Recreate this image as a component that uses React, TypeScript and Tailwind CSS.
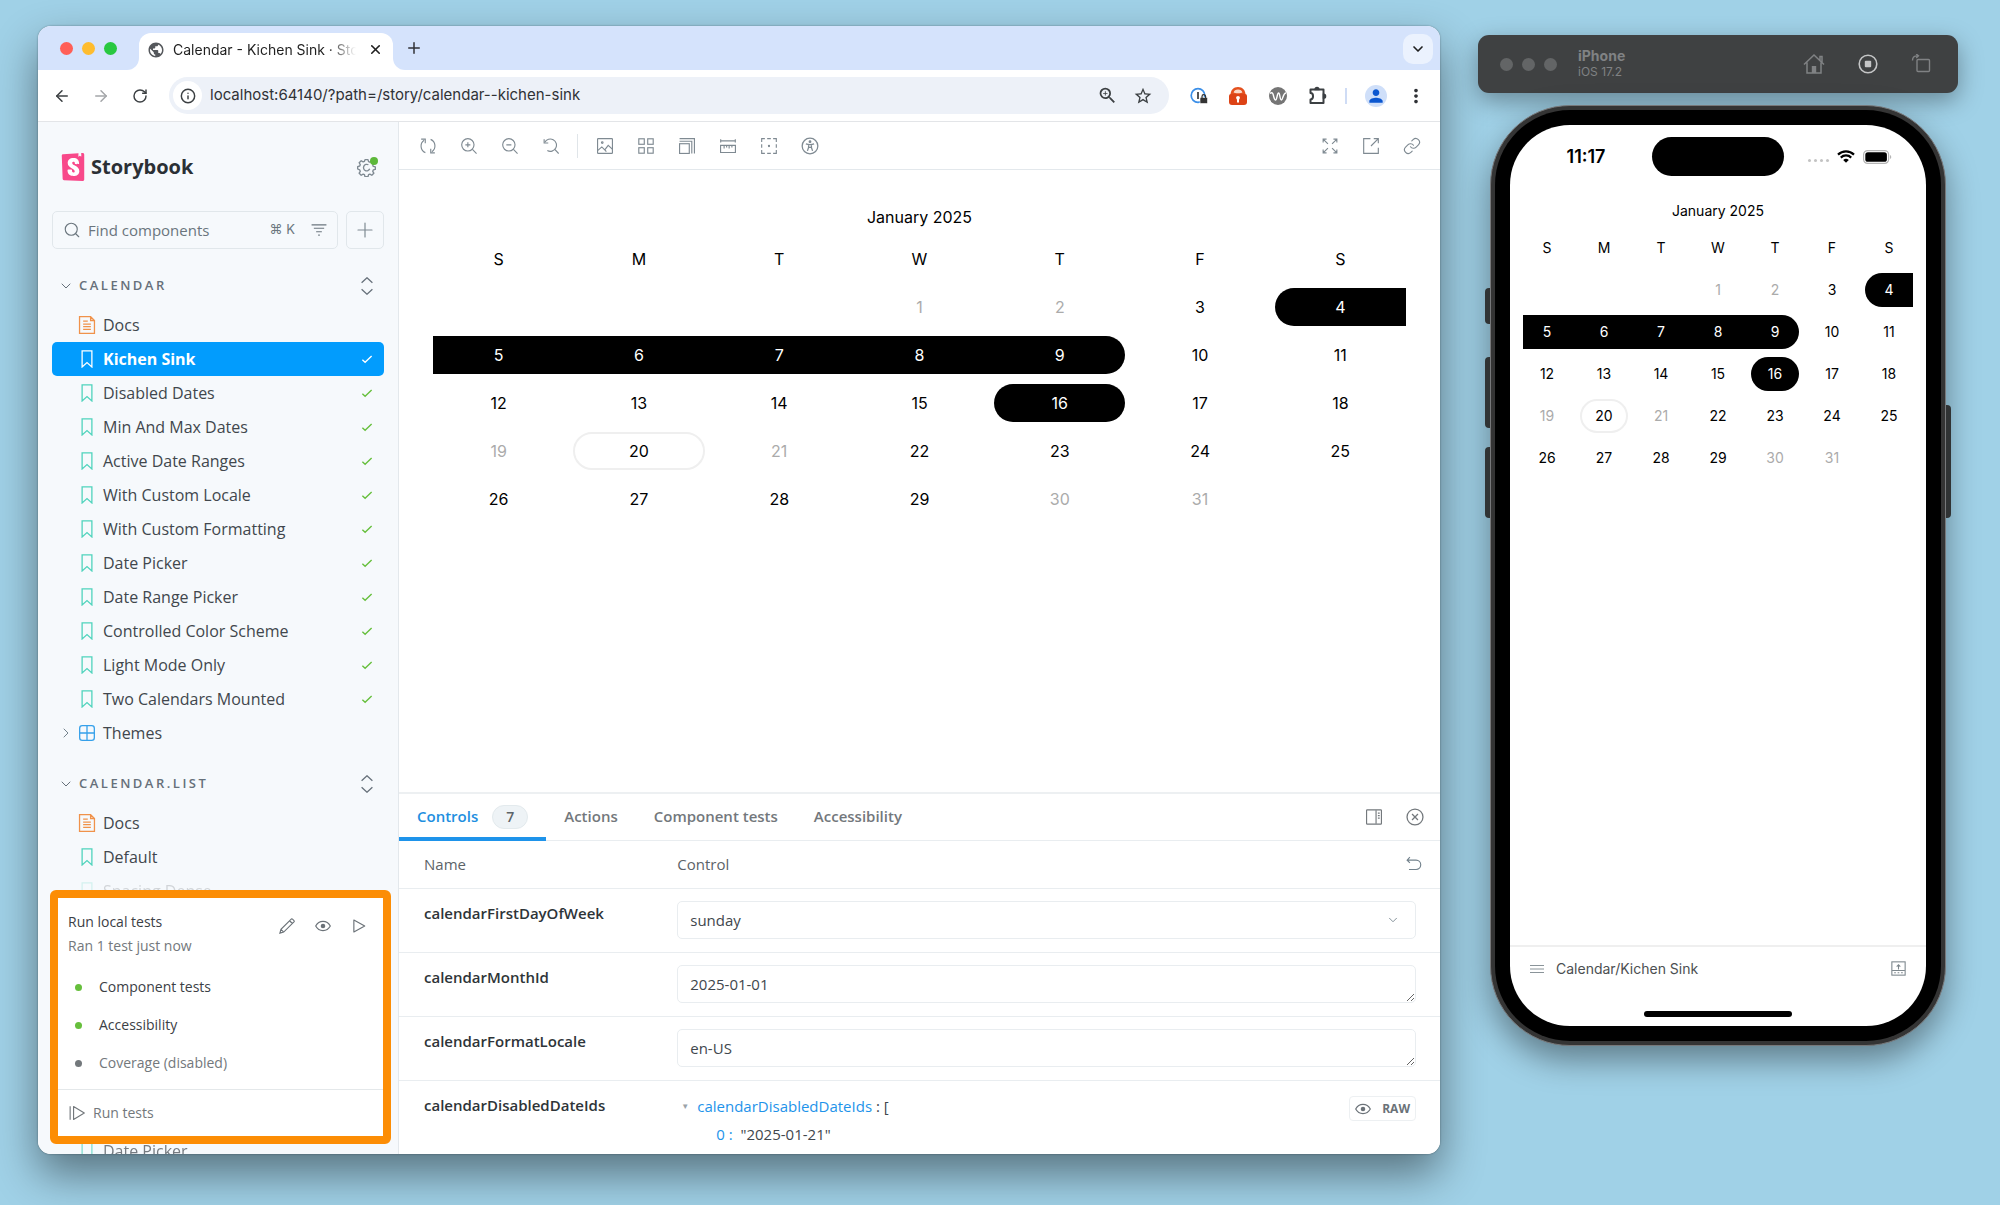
import type { ReactNode } from "react";
import { ArrowLeft, ArrowRight, ChevronDown, ChevronRight, Info, Link, Plus, RotateCw, Search, X } from "lucide-react";
import { MdMoreVert, MdOutlineZoomIn, MdPerson, MdPublic, MdStarBorder } from "react-icons/md";
import { SiStorybook } from "react-icons/si";

function Glyph({ className = "size-4", children }: { className?: string; children: ReactNode }) {
  return (
    <svg viewBox="0 0 14 14" fill="none" stroke="currentColor" strokeWidth="1" className={className} aria-hidden="true">
      {children}
    </svg>
  );
}

const SyncIcon = () => (
  <Glyph>
    <path d="M4.7 12.8A6.2 6.2 0 0 1 3.6 2M9.3 1.2A6.2 6.2 0 0 1 10.4 12" />
    <path d="M1 1h3.6v3.6M13 13H9.4V9.4" />
  </Glyph>
);
const ZoomInIcon = () => (
  <Glyph>
    <circle cx="6" cy="6" r="5.4" />
    <path d="M10 10l3.6 3.6M6 3.8v4.4M3.8 6h4.4" />
  </Glyph>
);
const ZoomOutIcon = () => (
  <Glyph>
    <circle cx="6" cy="6" r="5.4" />
    <path d="M10 10l3.6 3.6M3.8 6h4.4" />
  </Glyph>
);
const ZoomResetIcon = () => (
  <Glyph>
    <path d="M1.6 3.8A5.4 5.4 0 1 1 3.8 11" />
    <path d="M1 1v3.4h3.6M10.3 10l3.4 3.6" />
  </Glyph>
);
const PhotoIcon = () => (
  <Glyph>
    <rect x="0.5" y="0.5" width="13" height="13" rx="0.6" />
    <circle cx="4.6" cy="4" r="0.7" />
    <path d="M.8 10.8l3.4-3 2.6 2.6 3-4 3.6 3.4M6.8 10.4l1.4 1.6" />
  </Glyph>
);
const GridIcon = () => (
  <Glyph>
    <rect x="0.7" y="0.7" width="4.8" height="4.8" />
    <rect x="8.5" y="0.7" width="4.8" height="4.8" />
    <rect x="0.7" y="8.5" width="4.8" height="4.8" />
    <rect x="8.5" y="8.5" width="4.8" height="4.8" />
  </Glyph>
);
const ViewportIcon = () => (
  <Glyph>
    <rect x="0.5" y="5" width="8.5" height="8.5" />
    <path d="M.5 2.8h10.7v10.7M.5.6h13v13" />
  </Glyph>
);
const MeasureIcon = () => (
  <Glyph>
    <path d="M.6 1v3M13.4 1v3M.6 2.5h12.8M.5 6.5h13v6.2H.5zM3.6 6.5v2.6M5.8 6.5v1.8M8 6.5v2.6M10.4 6.5v1.8" />
  </Glyph>
);
const OutlineIcon = () => (
  <Glyph>
    <path d="M.6 3.4V.6h2.8M10.6.6h2.8v2.8M13.4 10.6v2.8h-2.8M3.4 13.4H.6v-2.8M5.4.6h3.2M5.4 13.4h3.2M.6 5.4v3.2M13.4 5.4v3.2" />
    <circle cx="7" cy="7" r="0.5" fill="currentColor" />
  </Glyph>
);
const PersonIcon = () => (
  <Glyph className="size-[18px]">
    <circle cx="7" cy="7" r="6.1" />
    <circle cx="7" cy="3.6" r="0.6" fill="currentColor" />
    <path d="M3.8 5.4c2 .7 4.4.7 6.4 0M5.9 5.9v2.2L5 10.8M8.1 5.9v2.2l.9 2.7M5.9 8h2.2" />
  </Glyph>
);
const ExpandIcon = () => (
  <Glyph>
    <path d="M1 4V1h3M1.2 1.2l4 4M10 1h3v3M12.8 1.2l-4 4M13 10v3h-3M12.8 12.8l-4-4M4 13H1v-3M1.2 12.8l4-4" />
  </Glyph>
);
const ShareIcon = () => (
  <Glyph>
    <path d="M6.5.6H.6v12.8h12.8V8.6M9.4.6h4v4M13.2.8L7 7" />
  </Glyph>
);
const SidePanelIcon = () => (
  <Glyph>
    <rect x="0.5" y="0.8" width="13" height="12.4" rx="0.6" />
    <path d="M8.8 1v12M10.4 3.6h1.6M10.4 5.8h1.6M10.4 8h1.6" />
  </Glyph>
);
const CloseCircleIcon = () => (
  <Glyph className="size-[18px]">
    <circle cx="7" cy="7" r="6.2" />
    <path d="M4.7 4.7l4.6 4.6M9.3 4.7L4.7 9.3" />
  </Glyph>
);
const UndoIcon = () => (
  <Glyph>
    <path d="M3.4 1L1 3.6 3.4 6M1.2 3.6h7.6a4 4 0 0 1 0 8.2H2.6" />
  </Glyph>
);
const EyeIcon = () => (
  <Glyph>
    <path d="M.6 7C2 4.4 4.3 3 7 3s5 1.4 6.4 4C12 9.6 9.7 11 7 11S2 9.6.6 7z" />
    <circle cx="7" cy="7" r="2" fill="currentColor" stroke="none" />
  </Glyph>
);
const PencilIcon = () => (
  <Glyph>
    <path d="M.8 13.2l.9-3.3L10.9.8c.5-.4 2.9 1.8 2.4 2.4L4.1 12.3zM9.3 2.4l2.4 2.4M1.7 9.9l2.4 2.4" />
  </Glyph>
);
const PlayIcon = () => (
  <Glyph>
    <path d="M2.5 1.8v10.4l9.500-5.200z" strokeLinejoin="round" />
  </Glyph>
);
const PlayAllIcon = () => (
  <Glyph>
    <path d="M1 1v12M4 1.400v11.200L13.400 7z" strokeLinejoin="round" />
  </Glyph>
);
const FilterIcon = () => (
  <Glyph>
    <path d="M.5 2.5h13M2.5 5.5h9M4.5 8.5h5M6.3 11.5h1.4" />
  </Glyph>
);
const ExpandAltIcon = () => (
  <Glyph className="size-[18px]">
    <path d="M2.8 4.4L7 .6l4.2 3.8M2.8 9.6L7 13.4l4.2-3.8" />
  </Glyph>
);
const CheckIcon = () => (
  <Glyph className="size-3">
    <path d="M1.6 7.8l3.2 3L12.4 3.6" strokeWidth="1.6" />
  </Glyph>
);
const BookmarkIcon = () => (
  <Glyph className="size-[18px]">
    <path d="M3.2.6h7.6v12.6L7 9.8l-3.8 3.4z" />
  </Glyph>
);
const DocIcon = () => (
  <Glyph className="size-[18px]">
    <path d="M1.2.5h8.6l3 3v10H1.2zM9.8.5v3h3M4 4h3.6M4 6.3h6M4 8.3h6M4 10.4h6" />
  </Glyph>
);
const ComponentIcon = () => (
  <Glyph className="size-[18px]">
    <rect x="1.3" y="1.3" width="11.4" height="11.4" rx="2" />
    <path d="M7 1.400v11.200M1.400 7h11.200" />
  </Glyph>
);
const CogIcon = () => (
  <Glyph className="size-[19px]">
    <path d="M5.900 1.200h2.200l.4 1.500 1 .4 1.400-.8 1.500 1.500-.8 1.400.4 1 1.500.4v1.800l-1.500.4-.4 1 .8 1.400-1.500 1.500-1.400-.8-1 .4-.4 1.500H5.900l-.4-1.500-1-.4-1.400.8-1.500-1.500.8-1.400-.4-1L.5 8.100V6.300L2 5.900l.4-1-.8-1.400L3.100 2l1.400.8 1-.4z" strokeLinejoin="round" />
    <path d="M8.4 5A2.4 2.4 0 1 0 9.4 8" />
  </Glyph>
);

type Day = { n: number; kind?: "muted" | "start" | "mid" | "end" | "single" | "today"; bridge?: boolean };

const days: Day[] = Array.from({ length: 31 }, (_, i) => {
  const n = i + 1;
  if ([1, 2, 19, 21, 30, 31].includes(n)) return { n, kind: "muted" };
  if (n === 4) return { n, kind: "start" };
  if (n >= 5 && n <= 8) return { n, kind: "mid", bridge: true };
  if (n === 9) return { n, kind: "end" };
  if (n === 16) return { n, kind: "single" };
  if (n === 20) return { n, kind: "today" };
  return { n };
});

const dayStyle = {
  plain: "text-black",
  muted: "text-[#ababab]",
  start: "rounded-l-full bg-black text-white",
  mid: "bg-black text-white",
  end: "rounded-r-full bg-black text-white",
  single: "rounded-full bg-black text-white",
  today: "rounded-full border-2 border-[#efefef] text-black",
};

function Calendar({ compact = false }: { compact?: boolean }) {
  const size = compact ? "h-[34px] text-sm" : "h-[38px] text-base";
  return (
    <section aria-label="January 2025" className="font-['Inter',sans-serif] text-black">
      <h2 className={compact ? "text-center text-sm leading-6" : "text-center text-base leading-[26px]"}>January 2025</h2>
      <div className={compact ? "mt-2 grid grid-cols-7 gap-x-[9px] gap-y-2" : "mt-[10px] grid grid-cols-7 gap-x-[9px] gap-y-[10px]"}>
        {["S", "M", "T", "W", "T", "F", "S"].map((d, i) => (
          <div key={i} className={`flex items-center justify-center ${size}`}>{d}</div>
        ))}
        <div className="col-span-3" />
        {days.map((d) => (
          <button key={d.n} type="button" className={`relative flex items-center justify-center ${size} ${dayStyle[d.kind ?? "plain"]}`}>
            {d.n}
            {d.bridge && <span className="absolute inset-y-0 left-full w-[10px] bg-black" />}
          </button>
        ))}
      </div>
    </section>
  );
}

function BrowserChrome() {
  return (
    <header className="font-['Inter',sans-serif] text-[#3c4043]">
      <div className="flex h-11 items-end bg-[#d5e3fc] pr-[7px] pl-[22px]">
        <div className="flex h-11 items-center gap-[9px]">
          <span className="size-[13px] rounded-full bg-[#ff5f57]" />
          <span className="size-[13px] rounded-full bg-[#febc2e]" />
          <span className="size-[13px] rounded-full bg-[#28c840]" />
        </div>
        <div className="relative ml-[22px] flex h-[37px] w-[254px] items-center rounded-t-xl bg-white pr-[10px] pb-1 pl-2">
          <span className="absolute bottom-0 -left-3 size-3 bg-white"><span className="block size-3 rounded-br-xl bg-[#d5e3fc]" /></span>
          <span className="absolute -right-3 bottom-0 size-3 bg-white"><span className="block size-3 rounded-bl-xl bg-[#d5e3fc]" /></span>
          <MdPublic className="size-[18px] shrink-0 text-[#55585c]" />
          <span className="ml-2 flex-1 overflow-hidden bg-linear-to-r from-[#1f1f1f] from-85% to-transparent bg-clip-text text-sm whitespace-nowrap text-transparent">
            Calendar - Kichen Sink · Storybook
          </span>
          <button type="button" aria-label="Close tab" className="ml-3 text-[#1f1f1f]"><X className="size-[15px]" strokeWidth={2.5} /></button>
        </div>
        <button type="button" aria-label="New tab" className="mb-[13px] ml-3 text-[#303236]"><Plus className="size-[18px]" /></button>
        <button type="button" aria-label="Search tabs" className="mb-[6px] ml-auto flex size-[30px] items-center justify-center rounded-[10px] bg-[#ebf2fe] text-[#1f1f1f]">
          <ChevronDown className="size-4" strokeWidth={2.5} />
        </button>
      </div>
      <div className="flex h-[52px] items-center border-b border-[#e3e5e8] bg-white pr-[13px] pl-[15px]">
        <button type="button" aria-label="Back"><ArrowLeft className="size-[18px]" /></button>
        <button type="button" aria-label="Forward" className="ml-[21px] text-[#a4a6a9]"><ArrowRight className="size-[18px]" /></button>
        <button type="button" aria-label="Reload" className="ml-[22px]"><RotateCw className="size-4" strokeWidth={2.2} /></button>
        <div className="ml-[21px] flex h-[37px] flex-1 items-center rounded-full bg-[#edf1f8] pr-4 pl-1">
          <span className="flex size-[29px] items-center justify-center rounded-full bg-white"><Info className="size-4" strokeWidth={2.2} /></span>
          <input aria-label="Address" defaultValue="localhost:64140/?path=/story/calendar--kichen-sink" className="ml-2 min-w-0 flex-1 bg-transparent text-[15px] text-[#303236] outline-none" />
          <MdOutlineZoomIn className="size-[21px]" />
          <MdStarBorder className="ml-[15px] size-5" />
        </div>
        <div className="ml-5 flex items-center">
          <svg viewBox="0 0 20 20" className="size-5" aria-hidden="true">
            <circle cx="9" cy="9.5" r="6.8" fill="#fff" stroke="#3b8fe8" strokeWidth="1.7" />
            <path d="M9 6v7" stroke="#555" strokeWidth="2" />
            <rect x="11" y="11.5" width="7.5" height="6" rx="1" fill="#333" stroke="#fff" strokeWidth="0.6" />
            <path d="M13 12v-1.500a1.800 1.800 0 0 1 3.600 0V12" fill="none" stroke="#333" strokeWidth="1.2" />
          </svg>
          <svg viewBox="0 0 20 20" className="ml-[19px] size-5" aria-hidden="true">
            <path d="M2.500 9C2.500 4 5.500 1 10 1s7.500 3 7.500 8z" fill="#e4511f" />
            <path d="M5.600 6.600C6 4.300 7.600 3.400 10 3.400s4 .9 4.400 3.200c-1 1-7.800 1-8.800 0z" fill="#fbd9c8" />
            <path d="M1 10a2 2 0 0 1 2-2h14a2 2 0 0 1 2 2v6a3 3 0 0 1-3 3H4a3 3 0 0 1-3-3z" fill="#dd4316" />
            <circle cx="10" cy="11.8" r="1.9" fill="#fff" />
            <path d="M9 12h2v4.500H9z" fill="#fff" />
          </svg>
          <svg viewBox="0 0 20 20" className="ml-5 size-5" aria-hidden="true">
            <circle cx="10" cy="10" r="9" fill="#757575" />
            <path d="M2 7.500c2-1.500 2.800-.5 3.300 1.500.7 3 1.300 5 2.300 5 1.400 0 1.500-7 3-7s1.200 7 2.700 7c1.700 0 1.600-7 4.700-7" fill="none" stroke="#fff" strokeWidth="1.4" />
          </svg>
          <svg viewBox="0 0 20 20" className="ml-5 size-5" fill="none" stroke="currentColor" strokeWidth="2" aria-hidden="true">
            <path d="M2.500 3.500h13v13.500h-13v-3.600c3.400 0 3.400-6.300 0-6.300z" strokeLinejoin="round" />
            <path d="M7.400 3.300a1.600 1.600 0 0 1 3.200 0zM15.700 8.600a1.600 1.600 0 0 1 0 3.200z" fill="currentColor" />
          </svg>
          <span className="ml-[17px] h-4 w-[2px] bg-[#cfdcf5]" />
          <button type="button" aria-label="Profile" className="ml-[18px] flex size-[22px] items-center justify-center rounded-full bg-[#cfdff9] text-[#0b57d0]"><MdPerson className="size-5" /></button>
          <button type="button" aria-label="Menu" className="ml-[18px] text-[#303236]"><MdMoreVert className="size-[22px]" /></button>
        </div>
      </div>
    </header>
  );
}

function Group({ title, children }: { title: string; children: ReactNode }) {
  return (
    <section>
      <div className="mb-2 flex h-7 items-center pr-2 pl-[6px] text-[#66707a]">
        <button type="button" className="flex flex-1 items-center gap-[5px] text-left text-[13px] font-semibold tracking-[2.5px] uppercase">
          <ChevronDown className="size-4" strokeWidth={1.5} />
          {title}
        </button>
        <button type="button" aria-label={`Expand all in ${title}`}><ExpandAltIcon /></button>
      </div>
      <ul>{children}</ul>
    </section>
  );
}

function Item({ label, kind = "story", selected = false, passed = false, expandable = false, fade = "" }: {
  label: string; kind?: "story" | "docs" | "component"; selected?: boolean; passed?: boolean; expandable?: boolean; fade?: string;
}) {
  const iconColor = selected ? "text-white" : kind === "docs" ? "text-[#f0924a]" : kind === "component" ? "text-[#35a0ea]" : "text-[#4fd3bc]";
  return (
    <li className={fade}>
      <a href="#" className={`flex h-[34px] items-center rounded-[5px] pr-[7px] pl-[6px] text-base ${selected ? "bg-[#029cfd] font-bold text-white" : "text-[#41474d]"}`}>
        <span className="flex w-5 shrink-0">{expandable && <ChevronRight className="size-4 text-[#73828c]" strokeWidth={1.5} />}</span>
        <span className={`mr-[7px] ${iconColor}`}>
          {kind === "docs" ? <DocIcon /> : kind === "component" ? <ComponentIcon /> : <BookmarkIcon />}
        </span>
        <span className="flex-1">{label}</span>
        {passed && <span className={selected ? "mr-1 text-white" : "mr-1 text-[#66bf3c]"}><CheckIcon /></span>}
      </a>
    </li>
  );
}

const stories = ["Disabled Dates", "Min And Max Dates", "Active Date Ranges", "With Custom Locale", "With Custom Formatting", "Date Picker", "Date Range Picker", "Controlled Color Scheme", "Light Mode Only", "Two Calendars Mounted"];

function TestPanel() {
  return (
    <section aria-label="Local tests" className="absolute right-[7px] bottom-[10px] left-3 rounded-md border-8 border-[#fc8d05] bg-white pt-3 text-sm text-[#3b4045]">
      <div className="flex justify-between pr-4 pl-[10px]">
        <div className="leading-6">
          <p className="font-medium">Run local tests</p>
          <p className="text-[#73787c]">Ran 1 test just now</p>
        </div>
        <div className="flex h-8 items-center gap-5 text-[#6b7278]">
          <button type="button" aria-label="Edit"><PencilIcon /></button>
          <button type="button" aria-label="Watch"><EyeIcon /></button>
          <button type="button" aria-label="Run"><PlayIcon /></button>
        </div>
      </div>
      <ul className="mt-[10px] mb-[7px]">
        {[
          ["Component tests", "bg-[#66bf3c]", ""],
          ["Accessibility", "bg-[#66bf3c]", ""],
          ["Coverage (disabled)", "bg-[#73787c]", "text-[#73787c]"],
        ].map(([label, dot, tone]) => (
          <li key={label} className={`flex h-[38px] items-center gap-[17px] pl-[17px] ${tone}`}>
            <span className={`size-[7px] rounded-full ${dot}`} />
            {label}
          </li>
        ))}
      </ul>
      <button type="button" className="flex h-[47px] w-full items-center gap-2 border-t border-[#e4e8ea] pl-[11px] font-medium text-[#73787c]">
        <PlayAllIcon />
        Run tests
      </button>
    </section>
  );
}

function Sidebar() {
  return (
    <aside className="relative w-[361px] shrink-0 overflow-hidden border-r border-[#e3e8ec] bg-[#f6f9fc] px-[14px] pt-[31px]">
      <div className="flex h-7 items-center pr-2 pl-[9px]">
        <span className="relative flex"><span className="absolute inset-x-1 inset-y-1 bg-white" /><SiStorybook className="relative -mx-[2px] size-7 text-[#f8498a]" /></span>
        <span className="ml-[6px] text-xl font-bold text-[#2b3035]">Storybook</span>
        <button type="button" aria-label="Settings" className="relative ml-auto text-[#7f8a92]">
          <CogIcon />
          <span className="absolute -top-px -right-[2px] size-2 rounded-full bg-[#5db83a]" />
        </button>
      </div>
      <div className="mt-[30px] flex gap-2">
        <label className="flex h-[38px] min-w-0 flex-1 items-center rounded-[5px] border border-[#e1e7eb] px-[10px] text-[#6b767e]">
          <Search className="size-[18px] shrink-0" strokeWidth={1.5} />
          <input aria-label="Find components" placeholder="Find components" className="ml-[7px] min-w-0 flex-1 bg-transparent text-[15px] outline-none placeholder:text-[#6a757d]" />
          <kbd className="mr-4 font-['Inter',sans-serif] text-[13px]">⌘ K</kbd>
          <FilterIcon />
        </label>
        <button type="button" aria-label="Create story" className="flex size-[38px] items-center justify-center rounded-[5px] border border-[#e1e7eb] text-[#7f8a92]"><Plus className="size-6" strokeWidth={1.2} /></button>
      </div>
      <nav className="mt-[23px] flex flex-col gap-5">
        <Group title="Calendar">
          <Item label="Docs" kind="docs" />
          <Item label="Kichen Sink" selected passed />
          {stories.map((s) => <Item key={s} label={s} passed />)}
          <Item label="Themes" kind="component" expandable />
        </Group>
        <Group title="Calendar.List">
          <Item label="Docs" kind="docs" />
          <Item label="Default" />
          <Item label="Spacing Dense" fade="opacity-20" />
          <Item label="Date Picker" fade="mt-[226px] opacity-70" />
        </Group>
      </nav>
      <TestPanel />
    </aside>
  );
}

function ToolButton({ label, children }: { label: string; children: ReactNode }) {
  return <button type="button" aria-label={label} className="flex w-[41px] justify-center">{children}</button>;
}

function Preview() {
  return (
    <section className="flex flex-1 flex-col bg-white">
      <div className="flex h-12 items-center border-b border-[#e3e8ec] pr-2 pl-2 text-[#7f8a92]">
        <ToolButton label="Remount"><SyncIcon /></ToolButton>
        <ToolButton label="Zoom in"><ZoomInIcon /></ToolButton>
        <ToolButton label="Zoom out"><ZoomOutIcon /></ToolButton>
        <ToolButton label="Reset zoom"><ZoomResetIcon /></ToolButton>
        <span className="mx-[6px] h-6 w-px bg-[#e0e5e9]" />
        <ToolButton label="Background"><PhotoIcon /></ToolButton>
        <ToolButton label="Grid"><GridIcon /></ToolButton>
        <ToolButton label="Viewport"><ViewportIcon /></ToolButton>
        <ToolButton label="Measure"><MeasureIcon /></ToolButton>
        <ToolButton label="Outline"><OutlineIcon /></ToolButton>
        <ToolButton label="Vision"><PersonIcon /></ToolButton>
        <span className="flex-1" />
        <ToolButton label="Full screen"><ExpandIcon /></ToolButton>
        <ToolButton label="Open in new tab"><ShareIcon /></ToolButton>
        <ToolButton label="Copy link"><Link className="size-[18px]" strokeWidth={1.5} /></ToolButton>
      </div>
      <div className="px-[34px] pt-[34px]"><Calendar /></div>
    </section>
  );
}

const nameCell = "pt-[13px] pl-[25px] text-left align-top text-[15px] leading-[22px] font-semibold text-[#2e3438]";
const controlCell = "pt-3 pr-6 pb-[13px] pl-[18px]";
const field = "block h-[38px] w-full rounded-[5px] border border-[#e9edf0] bg-white px-3 text-[15px] text-[#41474d] outline-none";

function ControlsPanel() {
  return (
    <section className="overflow-hidden border-t-2 border-[#edf0f2] bg-white pb-[6px]">
      <div className="flex h-[47px] items-center border-b border-[#e9edf0] pr-[5px] text-[15px] font-semibold text-[#73787c]">
        <div role="tablist" className="flex h-full gap-9">
          <button role="tab" aria-selected="true" type="button" className="relative flex items-center gap-[14px] px-[18px] text-[#1e8fe0]">
            Controls
            <span className="flex h-6 w-9 items-center justify-center rounded-full border border-[#e3eaed] bg-[#eef3f6] text-sm text-[#5c6368]">7</span>
            <span className="absolute inset-x-0 -bottom-px h-1 bg-[#1e93ea]" />
          </button>
          <button role="tab" aria-selected="false" type="button" className="-ml-[18px]">Actions</button>
          <button role="tab" aria-selected="false" type="button">Component tests</button>
          <button role="tab" aria-selected="false" type="button">Accessibility</button>
        </div>
        <span className="flex-1" />
        <ToolButton label="Change orientation"><SidePanelIcon /></ToolButton>
        <ToolButton label="Hide panel"><CloseCircleIcon /></ToolButton>
      </div>
      <table className="w-full table-fixed">
        <thead>
          <tr className="h-12 border-b border-[#e9edf0] text-left text-[15px] text-[#5c6368]">
            <th scope="col" className="w-1/4 pl-[25px] font-medium">Name</th>
            <th scope="col" className="px-[18px] font-medium">
              <span className="flex items-center justify-between">Control<button type="button" aria-label="Reset controls" className="text-[#73828c]"><UndoIcon /></button></span>
            </th>
          </tr>
        </thead>
        <tbody>
          <tr className="border-b border-[#e9edf0]">
            <th scope="row" className={nameCell}><label htmlFor="first-day">calendarFirstDayOfWeek</label></th>
            <td className={controlCell}>
              <div className="relative">
                <select id="first-day" className={`${field} appearance-none`}><option>sunday</option></select>
                <ChevronDown className="pointer-events-none absolute top-3 right-4 size-[14px] text-[#73828c]" strokeWidth={1.5} />
              </div>
            </td>
          </tr>
          <tr className="border-b border-[#e9edf0]">
            <th scope="row" className={nameCell}><label htmlFor="month-id">calendarMonthId</label></th>
            <td className={controlCell}><textarea id="month-id" rows={1} defaultValue="2025-01-01" className={`${field} resize-y overflow-hidden py-2 leading-5`} /></td>
          </tr>
          <tr className="border-b border-[#e9edf0]">
            <th scope="row" className={nameCell}><label htmlFor="locale">calendarFormatLocale</label></th>
            <td className={controlCell}><textarea id="locale" rows={1} defaultValue="en-US" className={`${field} resize-y overflow-hidden py-2 leading-5`} /></td>
          </tr>
          <tr>
            <th scope="row" className={nameCell}>calendarDisabledDateIds</th>
            <td className="flex items-start justify-between pt-[11px] pr-6 pl-[18px] text-[15px] leading-7 text-[#41474d]">
              <div>
                <p className="flex items-center"><span className="mr-1 w-4 text-center text-[8px] text-[#9aa3a9]">▼</span><span className="text-[#1e93ea]">calendarDisabledDateIds</span>&nbsp;: [</p>
                <p className="pl-[39px]"><span className="text-[#1e93ea]">0 :</span> &nbsp;"2025-01-21"</p>
              </div>
              <button type="button" className="mt-1 flex h-[25px] items-center gap-[11px] rounded-[4px] border border-[#edf0f2] px-[5px] text-xs leading-none font-bold text-[#6b7278]"><EyeIcon />RAW</button>
            </td>
          </tr>
        </tbody>
      </table>
    </section>
  );
}

function Phone() {
  return (
    <div className="relative mx-3 mt-3 flex flex-1 flex-col rounded-[80px] border border-[#77787a] bg-[#343434] p-1 shadow-[0_14px_32px_rgba(0,0,0,0.4)]">
      <span className="absolute top-[182px] -left-[6px] h-9 w-[5px] rounded-l-sm bg-[#303334]" />
      <span className="absolute top-[251px] -left-[6px] h-[71px] w-[5px] rounded-l-sm bg-[#303334]" />
      <span className="absolute top-[341px] -left-[6px] h-[71px] w-[5px] rounded-l-sm bg-[#303334]" />
      <span className="absolute top-[299px] -right-[6px] h-[113px] w-[5px] rounded-r-sm bg-[#303334]" />
      <div className="flex flex-1 flex-col rounded-[75px] bg-black p-[15px]">
        <div className="flex flex-1 flex-col overflow-hidden rounded-[60px] bg-white pt-3 font-['Inter',sans-serif]">
          <div className="grid h-[39px] grid-cols-[1fr_132px_1fr] items-center">
            <span className="pl-[10px] text-center text-lg font-semibold">11:17</span>
            <span className="h-full rounded-full bg-black" />
            <span className="flex items-center justify-end pr-[34px]">
              <span className="mt-2 mr-2 flex gap-[3px]">
                {[0, 1, 2, 3].map((i) => <i key={i} className="size-[3px] rounded-full bg-[#c3c3c3]" />)}
              </span>
              <svg viewBox="0 0 18 13" className="h-[13px] w-[18px]" fill="none" stroke="black" strokeWidth="2.2" aria-hidden="true">
                <path d="M1 4.600a11.500 11.500 0 0 1 16 0M3.800 7.600a7.400 7.400 0 0 1 10.400 0" />
                <path d="M6.200 10a4 4 0 0 1 5.600 0L9 12.800z" fill="black" stroke="none" />
              </svg>
              <svg viewBox="0 0 29 14" className="ml-2 h-[14px] w-[29px]" aria-hidden="true">
                <rect x="0.6" y="0.6" width="25" height="12.8" rx="4" fill="none" stroke="#b5b5b5" strokeWidth="1.2" />
                <rect x="2.3" y="2.2" width="21.6" height="9.6" rx="2.6" />
                <path d="M27 5v4a2.200 2.200 0 0 0 0-4z" fill="#b5b5b5" />
              </svg>
            </span>
          </div>
          <div className="mt-[23px] px-[13px]"><Calendar compact /></div>
          <div className="mt-auto flex h-[45px] items-center border-t-2 border-[#efefef] px-5 text-sm text-[#4c4f52]">
            <svg viewBox="0 0 14 10" className="mr-3 h-[10px] w-[14px]" stroke="#8a9499" aria-hidden="true"><path d="M0 1.500h14M0 5h14M0 8.500h14" /></svg>
            Calendar/Kichen Sink
            <span className="ml-auto text-[#7c868c]">
              <Glyph className="size-[15px]"><rect x="0.8" y="0.8" width="12.4" height="12.4" /><path d="M1 8.800h12M7 8V3.600M5.300 5.200L7 3.500l1.700 1.700M3 11h1.500M6.200 11h1.500M9.400 11H11" /></Glyph>
            </span>
          </div>
          <div className="mx-auto mt-[21px] mb-[9px] h-[6px] w-[148px] rounded-full bg-black" />
        </div>
      </div>
    </div>
  );
}

function Simulator() {
  return (
    <section aria-label="Simulator" className="flex w-[480px] shrink-0 flex-col pt-[9px] pb-[108px] font-['Inter',sans-serif]">
      <div className="flex h-[58px] items-center rounded-[11px] bg-[#3f4142] pr-[27px] pl-[22px] text-[#808284] shadow-[0_8px_24px_rgba(0,0,0,0.35)]">
        <div className="flex gap-[9px]">
          <span className="size-[13px] rounded-full bg-[#636566]" />
          <span className="size-[13px] rounded-full bg-[#636566]" />
          <span className="size-[13px] rounded-full bg-[#636566]" />
        </div>
        <div className="ml-[21px]">
          <p className="text-sm leading-4 font-bold">iPhone</p>
          <p className="text-xs leading-4">iOS 17.2</p>
        </div>
        <div className="ml-auto flex items-center gap-[33px]">
          <button type="button" aria-label="Home">
            <svg viewBox="0 0 22 22" className="size-[22px]" fill="none" stroke="currentColor" strokeWidth="1.5" aria-hidden="true">
              <path d="M1 11.500L11 2l10 9.500M4 9.500V20h14V9.500M17 7.500V3.500h2v6" /><path d="M8.800 20v-7h4.400v7z" fill="currentColor" stroke="none" />
            </svg>
          </button>
          <button type="button" aria-label="Record" className="text-[#c4c5c6]">
            <svg viewBox="0 0 20 20" className="size-5" fill="none" stroke="currentColor" strokeWidth="1.6" aria-hidden="true">
              <circle cx="10" cy="10" r="8.8" /><rect x="6.8" y="6.8" width="6.4" height="6.4" rx="1" fill="currentColor" stroke="none" />
            </svg>
          </button>
          <button type="button" aria-label="Rotate">
            <svg viewBox="0 0 20 20" className="size-5" fill="none" stroke="currentColor" strokeWidth="1.4" aria-hidden="true">
              <rect x="6" y="5.5" width="12.5" height="12" rx="1" /><path d="M1.500 6.500c0-3.200 1.400-4.600 5-4.600M5.200 0l2.300 1.900-2.300 2.200" />
            </svg>
          </button>
        </div>
      </div>
      <Phone />
    </section>
  );
}

export default function App() {
  return (
    <main className="flex h-screen gap-[38px] bg-[#a0d1e7] pt-[26px] pr-[42px] pb-[51px] pl-[38px] font-['Open_Sans',sans-serif]">
      <div className="flex min-w-0 flex-1 flex-col overflow-hidden rounded-[13px] bg-white shadow-[0_20px_44px_rgba(0,0,0,0.45),0_0_2px_rgba(0,0,0,0.4)]">
        <BrowserChrome />
        <div className="flex min-h-0 flex-1">
          <Sidebar />
          <div className="flex min-w-0 flex-1 flex-col">
            <Preview />
            <ControlsPanel />
          </div>
        </div>
      </div>
      <Simulator />
    </main>
  );
}
